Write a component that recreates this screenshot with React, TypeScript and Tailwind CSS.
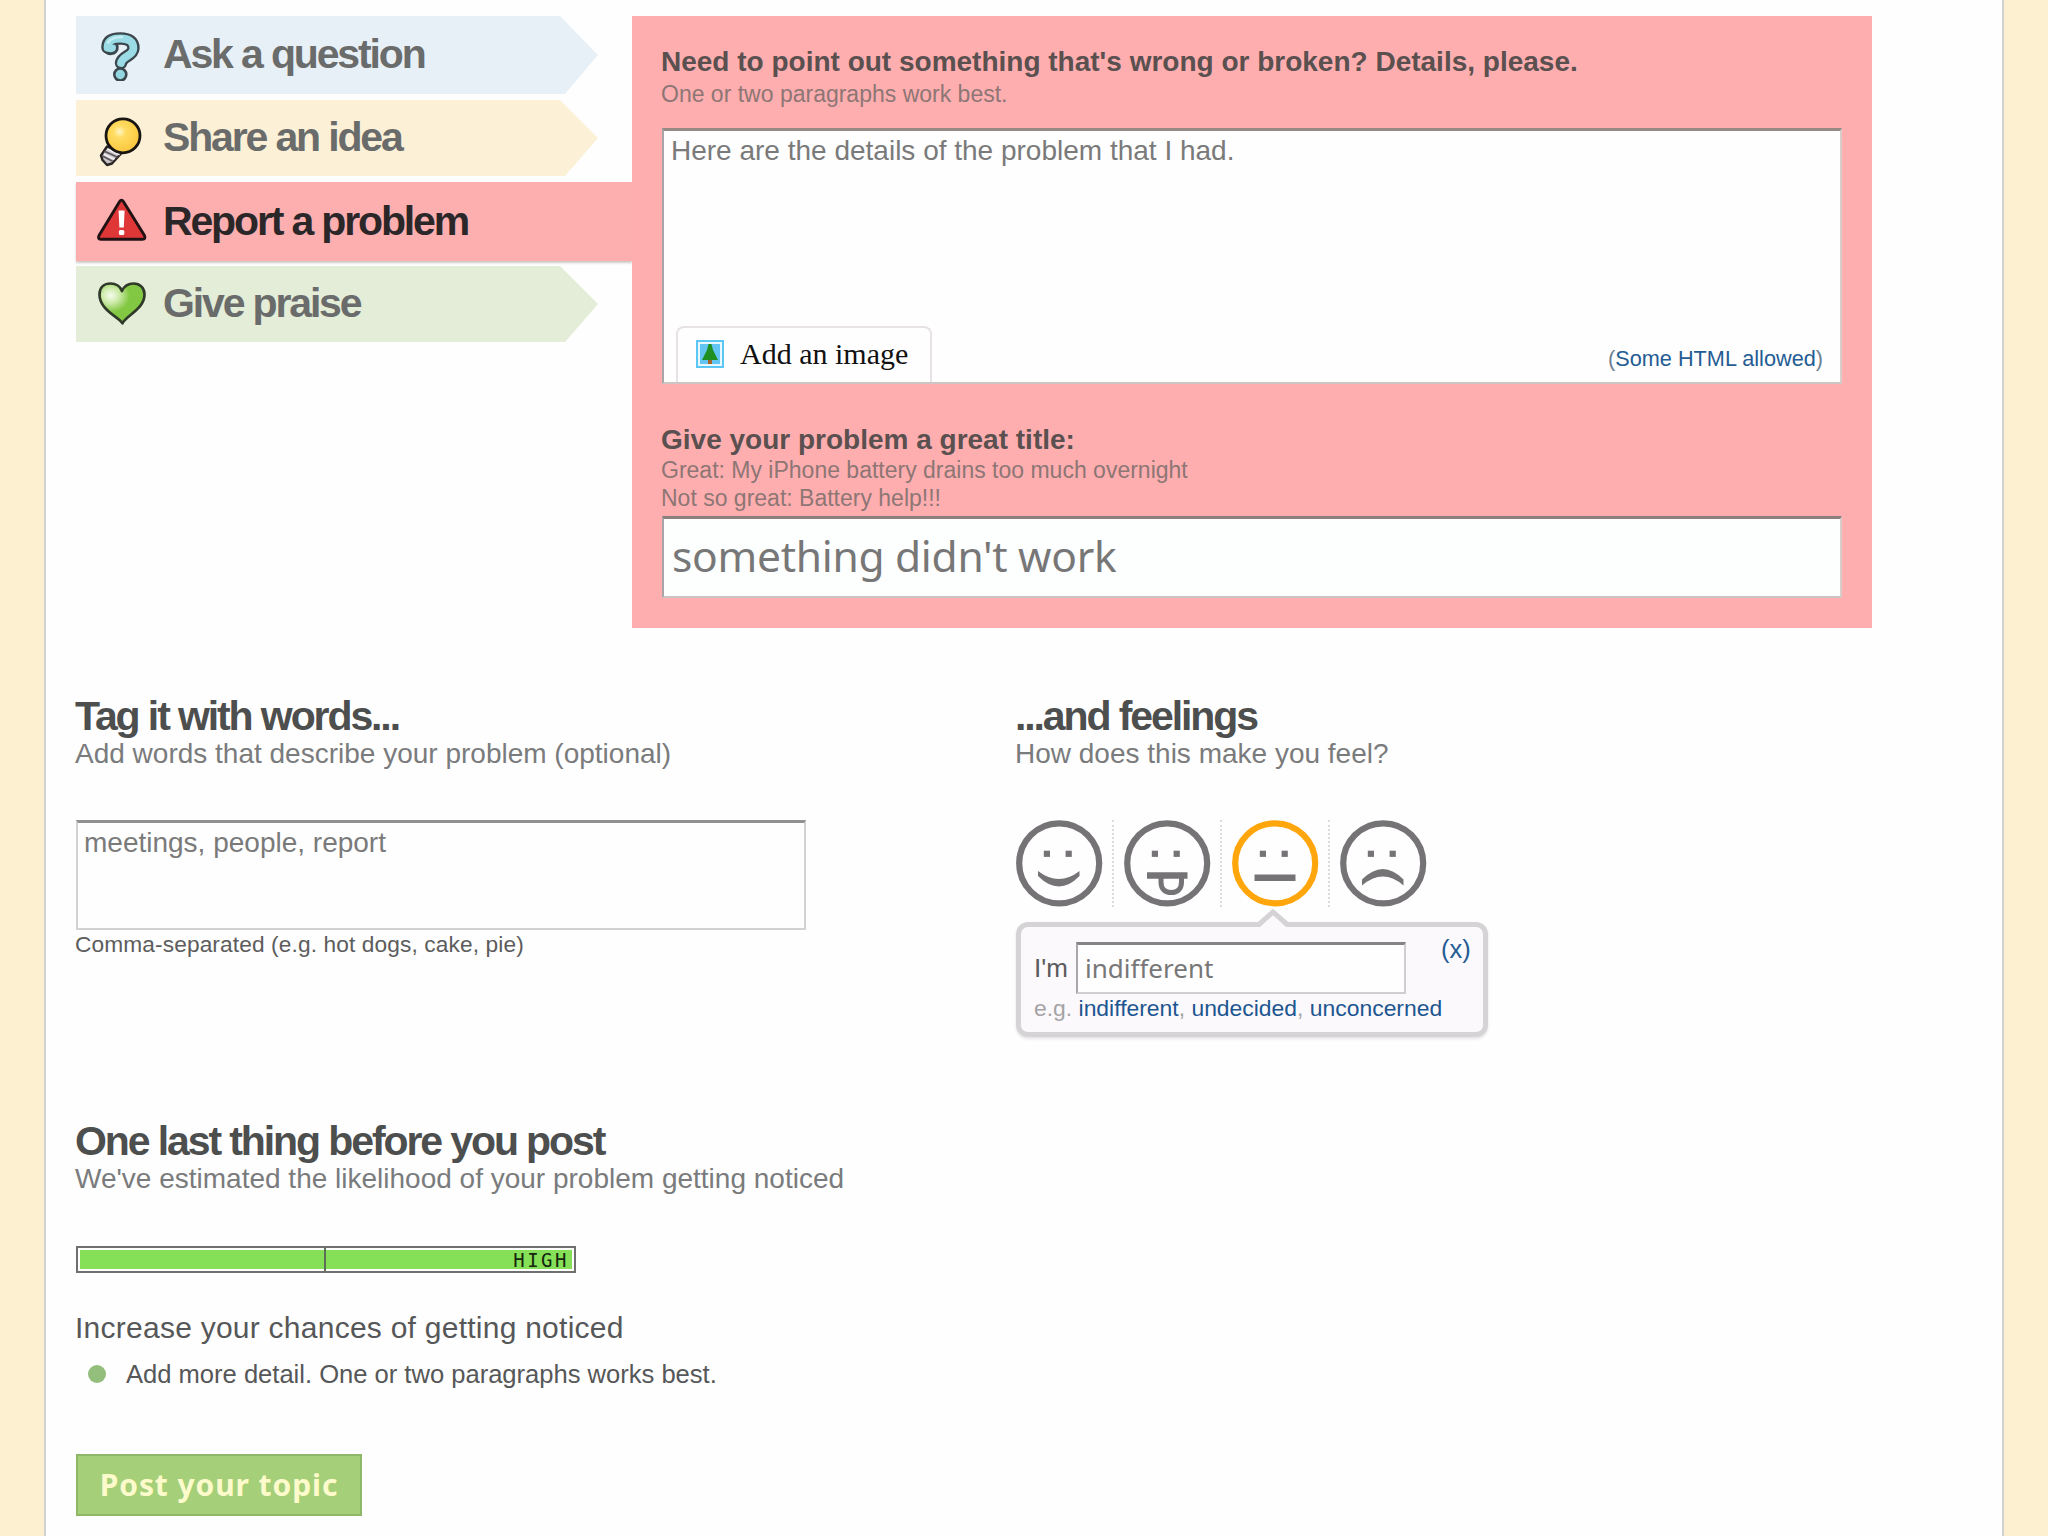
import type { ReactNode } from 'react';
import clsx from 'clsx';

interface Topic {
  label: string;
  icon: ReactNode;
  className: string;
  active?: boolean;
}

function QuestionIcon() {
  return (
    <svg width="52" height="52" viewBox="0 0 52 52" fill="none" strokeLinecap="round" strokeLinejoin="round">
      <circle cx="24.300" cy="45.500" r="6" fill="#93d5e0" stroke="#3b474d" strokeWidth="2.600" />
      <path d="M11.500 18.500C11.500 11.500 16.500 9.500 24.500 9.500C32.500 9.500 37.800 12.500 37.400 19.500C36.800 27.500 26.500 26.500 25 34" stroke="#3b474d" strokeWidth="12.500" />
      <path d="M11.500 18.500C12.500 22 18 21.500 17.500 18" stroke="#3b474d" strokeWidth="10.500" />
      <path d="M11.500 18.500C11.500 11.500 16.500 9.500 24.500 9.500C32.500 9.500 37.800 12.500 37.400 19.500C36.800 27.500 26.500 26.500 25 34" stroke="#9adbe5" strokeWidth="7.800" />
      <path d="M11.500 18.500C12.500 21 17 20.500 17 18.500" stroke="#9adbe5" strokeWidth="6" />
      <path d="M12 13.500C15 9 21 8 26 8" stroke="#c5eef3" strokeWidth="2.500" />
    </svg>
  );
}

function IdeaIcon() {
  return (
    <svg width="52" height="52" viewBox="0 0 52 52" className="overflow-visible" fill="none" strokeLinecap="round" strokeLinejoin="round">
      <defs>
        <radialGradient id="bulb" cx="0.400" cy="0.380" r="0.600">
          <stop offset="0" stopColor="#fff6c8" />
          <stop offset="0.300" stopColor="#ffdc62" />
          <stop offset="1" stopColor="#fbc840" />
        </radialGradient>
      </defs>
      <path d="M11 34.500L5 43.500L6.500 48L11 53L16 51.500L26 40.500Z" fill="#c9c6ca" stroke="#2b2526" strokeWidth="2.400" />
      <path d="M9 39.500L21 45M6.500 44L16 49" stroke="#5c575b" strokeWidth="1.600" />
      <path d="M12 37.500L23 42.500M8.500 42.500L18 47" stroke="#f3f1f3" strokeWidth="1.600" />
      <circle cx="27" cy="23.800" r="17" fill="url(#bulb)" stroke="#181512" strokeWidth="2.800" />
    </svg>
  );
}

function ProblemIcon() {
  return (
    <svg width="52" height="52" viewBox="0 0 52 52" fill="none" strokeLinecap="round" strokeLinejoin="round">
      <path d="M23.500 5.800Q25.500 2.500 27.500 5.800L48.500 39.500Q50 43.300 46.500 43.300H4.800Q1.500 43.300 3 39.500Z" fill="#df3738" stroke="#211112" strokeWidth="2.900" />
      <path d="M22.600 14.500H28.600L27.800 31.500H23.400Z" fill="#fff" />
      <rect x="22.900" y="34" width="5.400" height="5" rx="1.500" fill="#fff" />
    </svg>
  );
}

function PraiseIcon() {
  return (
    <svg width="52" height="52" viewBox="0 0 52 52" fill="none" strokeLinejoin="round">
      <defs>
        <radialGradient id="heart" cx="0.250" cy="0.300" r="0.420">
          <stop offset="0" stopColor="#f6fcee" />
          <stop offset="0.400" stopColor="#d3edb3" />
          <stop offset="1" stopColor="#83c843" />
        </radialGradient>
      </defs>
      <path
        d="M26.500 45.300C23 39 3.500 32 3.500 16.500C3.500 9 8.500 5.500 14.500 5.500C20 5.500 24.500 8.500 26 13C28 8.500 32 5.500 37.500 5.500C43.500 5.500 48.500 9.500 48.500 16.500C48.500 31 30 37.500 26.500 45.300Z"
        fill="url(#heart)"
        stroke="#2f3a2a"
        strokeWidth="2.700"
      />
    </svg>
  );
}

const topics: Topic[] = [
  { label: 'Ask a question', icon: <QuestionIcon />, className: 'h-[78px] bg-[#e8f0f7]' },
  { label: 'Share an idea', icon: <IdeaIcon />, className: 'h-[76px] bg-[#fcf1d6]' },
  { label: 'Report a problem', icon: <ProblemIcon />, className: 'h-[79px] bg-[#fdafb0]', active: true },
  { label: 'Give praise', icon: <PraiseIcon />, className: 'h-[76px] bg-[#e3edd7]' },
];

function TopicNav() {
  return (
    <nav className="flex w-[556px] shrink-0 flex-col gap-[6px]">
      {topics.map((topic) => (
        <a
          key={topic.label}
          className={clsx(
            'flex items-center pl-[20px] text-[41px] font-bold tracking-[-2.15px]',
            topic.className,
            topic.active
              ? '-mb-px w-full text-[#2b2729] shadow-[0_2px_2px_rgba(120,100,100,0.35)]'
              : 'w-[522px] text-[#6a6b6b] [clip-path:polygon(0_0,484px_0,100%_50%,489px_100%,0_100%)]',
          )}
        >
          {topic.icon}
          <span className="ml-[15px] pb-[2px] leading-[60px]">{topic.label}</span>
        </a>
      ))}
    </nav>
  );
}

function TreeIcon() {
  return (
    <svg width="28" height="28" viewBox="0 0 28 28">
      <rect x="1" y="1" width="26" height="26" fill="#e9f8ff" stroke="#5cc6f5" strokeWidth="2" />
      <rect x="4" y="4" width="20" height="20" fill="#62c5f4" />
      <path d="M12.500 4H15.500L17 10L19 14L22 20H6L9 14L11 10Z" fill="#1f8f22" />
      <rect x="12" y="20" width="4" height="4" fill="#a3632a" />
    </svg>
  );
}

function DetailsPanel() {
  return (
    <section className="h-[612px] w-[1240px] bg-[#ffaeb0] pt-[28px] pl-[29px]">
      <h2 className="text-[28px] leading-9 font-bold text-[#59504f]">
        Need to point out something that's wrong or broken? Details, please.
      </h2>
      <p className="text-[23px] leading-7 text-[#8d7674]">One or two paragraphs work best.</p>
      <div className="mt-[20px] ml-px flex h-[256px] w-[1180px] flex-col justify-between border-t-[3px] border-r-2 border-b-2 border-l-2 border-t-[#968a86] border-r-[#d9cccb] border-b-[#cdc5c3] border-l-[#aaa4a8] bg-[#fefefe]">
        <p className="pt-[4px] pl-[7px] text-[28px] leading-8 text-[#7a7a7a]">
          Here are the details of the problem that I had.
        </p>
        <div className="flex items-end justify-between pr-[17px] pl-[12px]">
          <button className="flex h-[56px] w-[256px] items-center rounded-t-lg border-2 border-b-0 border-[#e6e2e6] bg-[#fefefe] pb-[2px] pl-[18px] font-['Liberation_Serif',serif] text-[30px] text-[#111]">
            <TreeIcon />
            <span className="ml-[16px] leading-8 whitespace-nowrap">Add an image</span>
          </button>
          <span className="pb-[9px] text-[21.7px] leading-7 text-[#6c7f92]">
            (<a className="text-[#245c93]">Some HTML allowed</a>)
          </span>
        </div>
      </div>
      <h2 className="mt-[38px] text-[28px] leading-[35px] font-bold text-[#59504f]">
        Give your problem a great title:
      </h2>
      <p className="-mt-px text-[23px] leading-7 text-[#8d7674]">Great: My iPhone battery drains too much overnight</p>
      <p className="text-[23px] leading-7 text-[#8d7674]">Not so great: Battery help!!!</p>
      <div className="mt-[4px] ml-px flex h-[82px] w-[1180px] items-center border-t-[3px] border-r-2 border-b-2 border-l-2 border-t-[#8c7f7d] border-r-[#d9cccb] border-b-[#cdc5c3] border-l-[#aaa4a8] bg-[#fdfefe] pb-[3px] pl-[8px] font-['Noto_Sans',sans-serif] text-[42.5px] leading-[60px] tracking-[-0.28px] text-[#777]">
        something didn't work
      </div>
    </section>
  );
}

const faces = [
  { name: 'happy', mouth: <path d="M22 51Q43 67 63.500 51V56Q43 77 22 56Z" fill="#757376" /> },
  {
    name: 'silly',
    mouth: (
      <g fill="none" stroke="#757376">
        <path d="M23 55.500H63.500" strokeWidth="6.400" />
        <path d="M37 56V62C37 69 41 72.500 47.200 72.500C53.400 72.500 57.500 69 57.500 62V56" strokeWidth="5" />
      </g>
    ),
  },
  { name: 'indifferent', mouth: <path d="M22.500 57.800H63.500" stroke="#757376" strokeWidth="6.600" /> },
  { name: 'sad', mouth: <path d="M22 65.500V59.500Q43 38.500 63.500 59.500V65.500Q43 47.500 22 65.500Z" fill="#757376" /> },
];

function FeelingPicker() {
  return (
    <div className="flex gap-[10px]">
      {faces.map((face, i) => (
        <div
          key={face.name}
          className={clsx('flex h-[87px] w-[98px] shrink-0', i < 3 && 'border-r-2 border-dotted border-[#dcdadc]')}
        >
          <svg width="87" height="87" viewBox="0 0 87 87" className="shrink-0">
            <circle cx="43.200" cy="43.300" r="40" fill="#fefefe" stroke={face.name === 'indifferent' ? '#ffa60d' : '#757376'} strokeWidth="6.200" />
            <rect x="27.800" y="30.700" width="6.200" height="6.200" fill="#757376" />
            <rect x="49.600" y="30.700" width="6.200" height="6.200" fill="#757376" />
            {face.mouth}
          </svg>
        </div>
      ))}
    </div>
  );
}

function FeelingBubble() {
  return (
    <div className="relative mt-[15px] h-[115px] w-[472px] rounded-[12px] border-[5px] border-[#d5d3d6] bg-[#fbf9fc] pt-[15px] pl-[13px] shadow-[0_2px_3px_rgba(0,0,0,0.1)]">
      {/* Pointer up to the chosen face */}
      <svg width="30" height="20" viewBox="0 0 30 20" className="absolute -top-[18px] left-[237px]">
        <path d="M2 18L15 5L28 18V20H2Z" fill="#fbf9fc" />
        <path d="M0 16L15 3L30 16" fill="none" stroke="#d5d3d6" strokeWidth="5" />
      </svg>
      <div className="flex items-start">
        <span className="w-[42px] pt-[10px] text-[26px] leading-8 text-[#5b5b5d]">I'm</span>
        <div className="flex h-[52px] w-[330px] items-center border-2 border-t-[3px] border-[#d0ced1] border-t-[#868487] border-l-[#a9a7aa] bg-[#fefefe] pb-[2px] pl-[7px] font-['Noto_Sans',sans-serif] text-[26px] leading-8 text-[#777]">
          indifferent
        </div>
        <a className="-mt-[9px] ml-[35px] text-[25.5px] leading-8 text-[#245c93]">(x)</a>
      </div>
      <p className="text-[22.9px] leading-7 whitespace-nowrap text-[#a5a3a6]">
        e.g. <a className="text-[#1d5690]">indifferent</a>, <a className="text-[#1d5690]">undecided</a>,{' '}
        <a className="text-[#1d5690]">unconcerned</a>
      </p>
    </div>
  );
}

function SectionHeading({ title, hint }: { title: string; hint: string }) {
  return (
    <header className="-ml-px">
      <h2 className="text-[41px] leading-[42px] font-bold tracking-[-2.1px] text-[#4d4e4e]">{title}</h2>
      <p className="mt-px text-[28px] leading-8 text-[#7a7b7c]">{hint}</p>
    </header>
  );
}

export default function App() {
  return (
    <div className="h-[1536px] w-[2048px] overflow-hidden bg-[#fdf0d1] pr-[44px] pl-[44px] font-['Liberation_Sans',Arial,sans-serif]">
      <main className="h-full border-x-2 border-[#d2d1d2] bg-[#fefefe] pt-[16px] pl-[30px]">
        <div className="flex">
          <TopicNav />
          <DetailsPanel />
        </div>

        <div className="mt-[67px] flex">
          <section className="w-[940px]">
            <SectionHeading title="Tag it with words..." hint="Add words that describe your problem (optional)" />
            <div className="mt-[50px] h-[110px] w-[730px] border-2 border-t-[3px] border-[#d3d2d3] border-t-[#929093] pt-[4px] pl-[6px] text-[28px] leading-8 text-[#7a7a7a]">
              meetings, people, report
            </div>
            <p className="-ml-px text-[22.7px] leading-7 tracking-[0.12px] text-[#5c5c5d]">
              Comma-separated (e.g. hot dogs, cake, pie)
            </p>
          </section>
          <section>
            <SectionHeading title="...and feelings" hint="How does this make you feel?" />
            <div className="mt-[50px]">
              <FeelingPicker />
              <FeelingBubble />
            </div>
          </section>
        </div>

        <section className="mt-[83px]">
          <SectionHeading
            title="One last thing before you post"
            hint="We've estimated the likelihood of your problem getting noticed"
          />
          <div className="mt-[51px] flex h-[27px] w-[500px] border-2 border-[#6f706f] p-[2px]">
            <div className="-my-[2px] w-[246px] border-r-2 border-[#5d6f57] py-[2px]">
              <div className="h-full bg-[#85e057]" />
            </div>
            <div className="flex flex-1 items-center justify-end bg-[#85e057] pr-[3px] font-['DejaVu_Sans_Mono',monospace] text-[19px] leading-5 tracking-[2.5px] text-[#15250e]">
              HIGH
            </div>
          </div>
          <h3 className="mt-[37px] -ml-px text-[30px] leading-9 tracking-[0.25px] text-[#565758]">
            Increase your chances of getting noticed
          </h3>
          <ul className="mt-[12px] pl-[12px]">
            <li className="flex items-center text-[25.6px] leading-8 tracking-[-0.02px] text-[#565758]">
              <span className="mr-[20px] size-[18px] rounded-full bg-[#94be7c]" />
              Add more detail. One or two paragraphs works best.
            </li>
          </ul>
          <button className="mt-[64px] flex h-[62px] w-[286px] items-center justify-center border-2 border-[#8fb768] bg-[#a5cf79] pb-[1px] font-['Noto_Sans',sans-serif] text-[30px] leading-9 font-bold tracking-[0.9px] whitespace-nowrap text-[#fdfbcb]">
            Post your topic
          </button>
        </section>
      </main>
    </div>
  );
}
